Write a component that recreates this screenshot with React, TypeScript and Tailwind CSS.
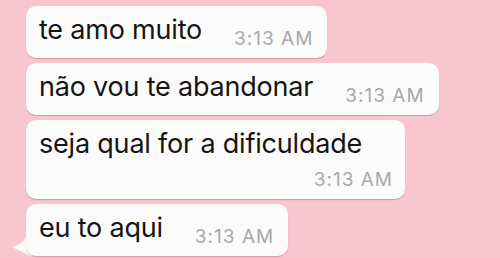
import React from 'react';

const messages = [
  { id: 1, text: 'te amo muito', time: '3:13 AM', wrap: false },
  { id: 2, text: 'não vou te abandonar', time: '3:13 AM', wrap: false },
  { id: 3, text: 'seja qual for a dificuldade', time: '3:13 AM', wrap: true },
  { id: 4, text: 'eu to aqui', time: '3:13 AM', wrap: false, tail: true },
];

const Bubble = ({ text, time, wrap, tail }: { text: string; time: string; wrap: boolean; tail?: boolean }) => (
  <div className="relative">
    {tail && (
      <svg className="absolute -left-[15px] bottom-0" width="22" height="22" viewBox="0 0 22 22">
        <path d="M16 0 Q13 10 1 13 Q11 18 20 22 L22 22 L22 0 Z" fill="#fbfbfb" />
      </svg>
    )}
    <div className="relative rounded-[10px] bg-[#fbfbfb] shadow-[0_1px_1px_rgba(120,80,90,0.35)] pl-[13px] pr-[14px]">
      {wrap ? (
        <div className="flex flex-col w-[352px] pt-[8px] pb-[8px]">
          <span className="text-[27px] leading-[32px] text-[#151515] tracking-[-0.2px]">{text}</span>
          <span className="self-end text-[19px] leading-[22px] text-[#a9a9a9] tracking-[1px] mt-[9px] mr-[-2px]">{time}</span>
        </div>
      ) : (
        <div className="flex items-end gap-[32px] pt-[8px] pb-[12px]">
          <span className="text-[27px] leading-[32px] text-[#151515] tracking-[-0.2px]">{text}</span>
          <span className="text-[19px] leading-[22px] text-[#a9a9a9] tracking-[1px] translate-y-[4px]">{time}</span>
        </div>
      )}
    </div>
  </div>
);

export default function App() {
  return (
    <div
      className="w-[500px] h-[258px] overflow-hidden bg-[#f7c6cf] pl-[26px] pt-[6px]"
      style={{ fontFamily: 'Inter, "Noto Sans", sans-serif' }}
    >
      <div className="flex flex-col items-start gap-[5px]">
        {messages.map((m) => (
          <Bubble key={m.id} text={m.text} time={m.time} wrap={m.wrap} tail={m.tail} />
        ))}
      </div>
    </div>
  );
}
